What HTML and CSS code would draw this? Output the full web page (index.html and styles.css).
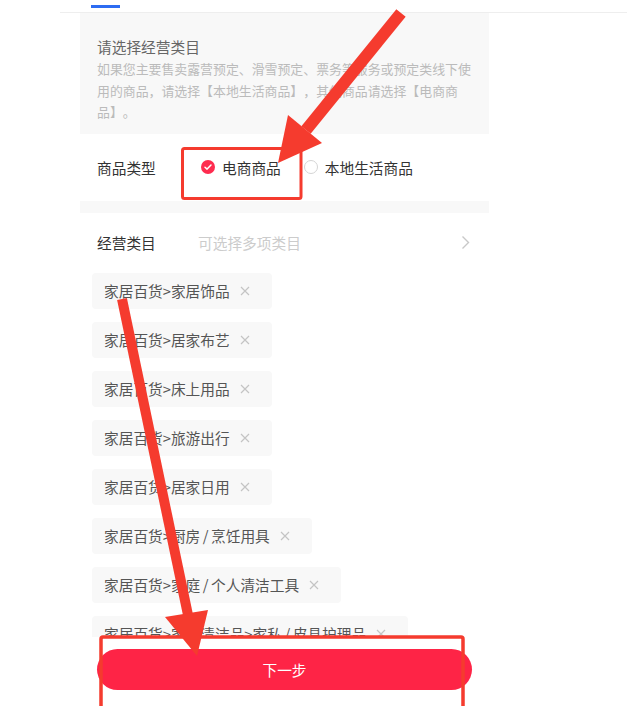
FILE: index.html
```html
<!DOCTYPE html>
<html lang="zh-CN">

<head>
    <meta charset="UTF-8">
    <meta name="viewport" content="width=device-width, initial-scale=1.0">
    <title>经营类目</title>
    <link rel="stylesheet" href="styles.css">
</head>

<body>
    <div class="tabs">
        <span class="tab-line"></span>
    </div>

    <div class="page">
        <div class="notice">
            <h3>请选择经营类目</h3>
            <p>如果您主要售卖露营预定、滑雪预定、票务等服务或预定类线下使用的商品，请选择【本地生活商品】，其他商品请选择【电商商品】。</p>
        </div>

        <div class="form-row type-row">
            <span class="label">商品类型</span>
            <div class="radios">
                <label class="radio checked">
                    <svg width="14" height="14" viewBox="0 0 14 14">
                        <circle cx="7" cy="7" r="7" fill="#fe2c4f" />
                        <path d="M4 7.2 L6.1 9.1 L10 5" fill="none" stroke="#fff" stroke-width="1.5" stroke-linecap="round" stroke-linejoin="round" />
                    </svg>
                    电商商品
                </label>
                <label class="radio">
                    <svg width="14" height="14" viewBox="0 0 14 14">
                        <circle cx="7" cy="7" r="6.5" fill="#fff" stroke="#d4d4d4" />
                    </svg>
                    本地生活商品
                </label>
            </div>
        </div>

        <div class="stripe"></div>

        <div class="form-row cat-row">
            <span class="label">经营类目</span>
            <span class="placeholder">可选择多项类目</span>
            <svg class="chevron" width="9" height="15" viewBox="0 0 9 15">
                <path d="M1.5 1.5 L7.5 7.5 L1.5 13.5" fill="none" stroke="#c8c8c8" stroke-width="1.4" />
            </svg>
        </div>

        <div class="tags" id="tags"></div>
    </div>

    <div class="footer">
        <button class="next-btn">下一步</button>
    </div>

    <!-- annotation overlay -->
    <svg class="marks" width="627" height="706" viewBox="0 0 627 706">
        <rect x="182.5" y="148.5" width="118.5" height="50" rx="2" fill="none" stroke="#f53b2e" stroke-width="3" />
        <rect x="101" y="637" width="362" height="90" rx="2" fill="none" stroke="#f53b2e" stroke-width="3.5" />
        <line x1="401" y1="13" x2="306" y2="130" stroke="#f53b2e" stroke-width="12" />
        <polygon points="278,163 288,115 322,143" fill="#f53b2e" />
        <line x1="122" y1="299" x2="188" y2="615" stroke="#f53b2e" stroke-width="10" />
        <polygon points="197,656 165,617 208,610" fill="#f53b2e" />
    </svg>

    <script>
        document.addEventListener('DOMContentLoaded', function () {
            const items = [
                '家居百货>家居饰品',
                '家居百货>居家布艺',
                '家居百货>床上用品',
                '家居百货>旅游出行',
                '家居百货>居家日用',
                '家居百货>厨房/烹饪用具',
                '家居百货>家庭/个人清洁工具',
                '家居百货>家庭清洁品>家私/皮具护理品'
            ];
            const tags = document.getElementById('tags');

            items.forEach(text => {
                const tag = document.createElement('div');
                tag.className = 'tag';

                // slashes get a bit of air around them
                const label = document.createElement('span');
                text.split('/').forEach((part, i) => {
                    if (i > 0) {
                        const slash = document.createElement('span');
                        slash.className = 'slash';
                        slash.textContent = '/';
                        label.appendChild(slash);
                    }
                    label.appendChild(document.createTextNode(part));
                });

                const close = document.createElementNS('http://www.w3.org/2000/svg', 'svg');
                close.setAttribute('class', 'tag-close');
                close.setAttribute('width', '10');
                close.setAttribute('height', '10');
                close.setAttribute('viewBox', '0 0 10 10');
                close.innerHTML = '<path d="M1 1 L9 9 M9 1 L1 9" stroke="#c4c4c4" stroke-width="1.2" />';

                tag.append(label, close);
                tags.appendChild(tag);
            });
        });
    </script>
</body>

</html>
```

FILE: styles.css
```css
* {
    margin: 0;
    padding: 0;
    box-sizing: border-box;
    font-family: 'Noto Sans CJK SC', 'Noto Sans', sans-serif;
}

body {
    background-color: #fff;
    color: #333;
    width: 627px;
    height: 706px;
    overflow: hidden;
}

.tabs {
    height: 13px;
    margin-left: 60px;
    border-bottom: 1px solid #eeeeee;
    padding-top: 5px;
}

.tab-line {
    display: block;
    width: 29px;
    height: 3px;
    margin-left: 31px;
    background-color: #2d6cf2;
}

.page {
    width: 409px;
    margin-left: 80px;
}

.notice {
    background-color: #f8f8f8;
    padding: 23px 14px 11px 17px;
}

.notice h3 {
    font-size: 14.7px;
    font-weight: 400;
    color: #666;
    line-height: 22px;
}

.notice p {
    font-size: 12.9px;
    color: #bbbbbb;
    line-height: 21.5px;
    text-spacing-trim: space-all;
}

.form-row {
    display: flex;
    align-items: center;
    padding: 0 17px;
    font-size: 14.7px;
}

.type-row {
    height: 67px;
}

.type-row .label {
    width: 104px;
}

.radios {
    display: flex;
    align-items: center;
    gap: 23px;
}

.radio {
    display: flex;
    align-items: center;
    gap: 7px;
    color: #333;
}

.stripe {
    height: 12px;
    background-color: #f8f8f8;
}

.cat-row {
    height: 59px;
}

.cat-row .label {
    width: 101px;
}

.placeholder {
    flex: 1;
    color: #cccccc;
}

.chevron {
    margin-right: 2px;
}

.tags {
    display: flex;
    flex-direction: column;
    align-items: flex-start;
    gap: 13px;
    padding: 1px 12px 0;
}

.tag {
    display: flex;
    align-items: center;
    height: 36px;
    padding: 0 22px 0 12px;
    background-color: #f8f8f8;
    border-radius: 4px;
    font-size: 14.7px;
    color: #555;
}

.slash {
    margin: 0 2.5px;
}

.tag-close {
    margin-left: 10px;
}

.footer {
    position: fixed;
    left: 80px;
    bottom: 0;
    width: 409px;
    height: 69px;
    background-color: #fff;
    padding: 12px 17px 0;
}

.next-btn {
    width: 100%;
    height: 41px;
    border: none;
    border-radius: 21px;
    background-color: #fe2446;
    color: #fff;
    font-size: 14.7px;
    cursor: pointer;
}

.marks {
    position: absolute;
    top: 0;
    left: 0;
    pointer-events: none;
}
```
